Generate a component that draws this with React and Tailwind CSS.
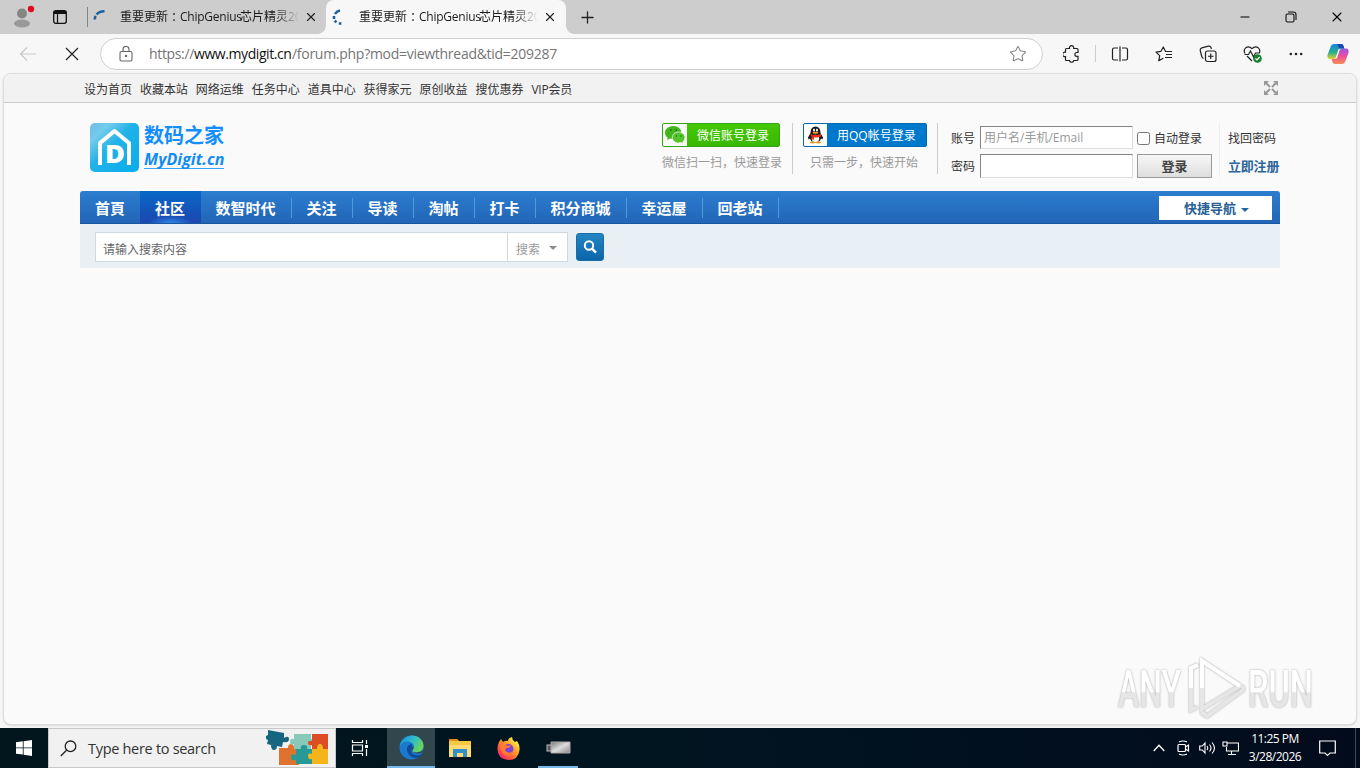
import { X, Plus, Minus, Star } from "lucide-react";

const topLinks = [
  "设为首页",
  "收藏本站",
  "网络运维",
  "任务中心",
  "道具中心",
  "获得家元",
  "原创收益",
  "搜优惠券",
  "VIP会员",
];

const navItems = [
  "首頁",
  "社区",
  "数智时代",
  "关注",
  "导读",
  "淘帖",
  "打卡",
  "积分商城",
  "幸运屋",
  "回老站",
];

const TabTitle = () => (
  <div className="flex w-[182px] whitespace-nowrap text-[12px] leading-[18px] text-[#1b1b1b] [mask-image:linear-gradient(to_right,black_155px,transparent_179px)]">
    <span>重要更新</span>
    <span lang="zh-TW" className="font-['Noto_Sans_CJK_TC',sans-serif]">：</span>
    <span className="w-[60px] tracking-[-0.25px]">ChipGenius</span>
    <span>芯片精灵</span>
    <span className="tracking-[-0.2px]">20</span>
  </div>
);

const TabStrip = () => (
  <div className="flex h-[34px] shrink-0 items-center bg-[#cdcdcd]">
    <svg className="ml-[12px] h-[24px] w-[24px] shrink-0" viewBox="0 0 24 24">
      <circle cx="10" cy="8.500" r="5" fill="#858585" />
      <ellipse cx="10" cy="18.500" rx="8" ry="4" fill="#999" />
      <circle cx="19" cy="4" r="3.200" fill="#e00b1c" />
    </svg>
    <svg className="ml-[17px] h-[14px] w-[14px] shrink-0" viewBox="0 0 14 14" fill="none" stroke="#111">
      <rect x="0.700" y="0.700" width="12.600" height="12.600" rx="2" strokeWidth="1.300" />
      <path d="M1 2.500h12" strokeWidth="3" />
      <path d="M4.500 3v10" strokeWidth="1.200" />
    </svg>
    <div className="ml-[20px] h-[20px] w-px shrink-0 bg-[#858585]" />
    <svg className="ml-[4px] h-[16px] w-[16px] shrink-0" viewBox="0 0 16 16" fill="none" stroke="#1d629f" strokeWidth="2.600">
      <path d="M2.700 10.500q.1-2 1-3.500M4.500 5.500q2.500-3.300 8-3.300" />
    </svg>
    <div className="ml-[12px]">
      <TabTitle />
    </div>
    <X className="ml-[2px] h-[14px] w-[14px] shrink-0 text-[#222]" strokeWidth={2} />
    <div className="relative ml-[8px] flex h-[34px] w-[240px] items-center rounded-t-[8px] bg-[#f7f7f7]">
      <div className="absolute -left-[8px] bottom-0 h-[8px] w-[8px] bg-[radial-gradient(circle_at_0_0,#cdcdcd_7.5px,#f7f7f7_8px)]" />
      <div className="absolute -right-[8px] bottom-0 h-[8px] w-[8px] bg-[radial-gradient(circle_at_100%_0,#cdcdcd_7.5px,#f7f7f7_8px)]" />
      <svg className="ml-[5px] h-[18px] w-[16px] shrink-0" viewBox="0 0 16 18" fill="none" stroke="#1d629f" strokeWidth="2.600">
        <path d="M9 2.500Q5.500 3.200 4 6M3 8v3M3.800 12.500l1.500 2M7.800 15.500h2.600" />
      </svg>
      <div className="ml-[12px]">
        <TabTitle />
      </div>
      <X className="ml-[2px] h-[14px] w-[14px] shrink-0 text-[#222]" strokeWidth={2} />
    </div>
    <Plus className="ml-[12px] h-[19px] w-[19px] text-[#222]" strokeWidth={1.6} />
    <div className="ml-auto flex items-center">
      <Minus className="h-[14px] w-[14px] text-black" strokeWidth={1.8} />
      <svg className="ml-[33px] h-[12px] w-[12px]" viewBox="0 0 12 12" fill="none" stroke="#111" strokeWidth="1.100">
        <rect x="1" y="3" width="8" height="8" rx="1.500" />
        <path d="M3 1h5.500A2.500 2.500 0 0 1 11 3.500V9" />
      </svg>
      <X className="mr-[15px] ml-[32px] h-[16px] w-[16px] text-black" strokeWidth={1.6} />
    </div>
  </div>
);

const Toolbar = () => (
  <div className="flex h-[39px] shrink-0 items-center bg-[#f7f7f7]">
    <svg className="ml-[19px] h-[16px] w-[18px]" viewBox="0 0 18 16" fill="none" stroke="#c9c9c9" strokeWidth="1.200">
      <path d="M17 8H1.500M8 1.500L1.500 8 8 14.500" />
    </svg>
    <svg className="ml-[28px] h-[14px] w-[14px]" viewBox="0 0 14 14" fill="none" stroke="#222" strokeWidth="1.200">
      <path d="M1 1l12 12M13 1L1 13" />
    </svg>
    <div className="mt-px ml-[21px] flex h-[32px] w-[943px] items-center rounded-full border border-[#d0d0d0] bg-white">
      <svg className="ml-[18px] h-[16px] w-[14px]" viewBox="0 0 14 16" fill="none" stroke="#666" strokeWidth="1.100">
        <rect x="1" y="5.500" width="12" height="9.500" rx="1.500" />
        <path d="M4 5.500V3.500a3 3 0 0 1 6 0v2" />
        <circle cx="7" cy="10" r="0.700" fill="#666" />
      </svg>
      <div className="ml-[16px] flex w-[420px] text-[14px] leading-[20px] whitespace-nowrap text-[#757575]">
        <span className="w-[45px] tracking-[-0.35px]">https://</span>
        <span className="w-[98px] tracking-[-0.42px] text-[#111]">www.mydigit.cn</span>
        <span className="tracking-[-0.28px]">/forum.php?mod=viewthread&amp;tid=209287</span>
      </div>
      <Star className="mr-[15px] ml-auto h-[18px] w-[18px] text-[#858585]" strokeWidth={1.4} />
    </div>
    <svg className="ml-[20px] h-[18px] w-[18px]" viewBox="0 0 18 18" fill="none" stroke="#222" strokeWidth="1.200">
      <path d="M3.500 3.500h3a2.200 2.200 0 1 1 4.200 0H14q1 0 1 1v3h-1.200a1.900 1.900 0 0 0 0 3.800H15v3.200q0 1-1 1h-3.200a2.200 2.200 0 0 1-4.300 0h-3q-1 0-1-1v-3a2.200 2.200 0 1 1 0-4.200V4.500q0-1 1-1z" />
    </svg>
    <div className="ml-[14px] h-[17px] w-px bg-[#ccc]" />
    <svg className="ml-[15px] h-[18px] w-[18px]" viewBox="0 0 18 18" fill="none" stroke="#222" strokeWidth="1.200">
      <path d="M7 3H3Q1.500 3 1.500 4.500v9Q1.500 15 3 15h4M9 1.500v15M11 3h4q1.500 0 1.500 1.500v9Q16.500 15 15 15h-4" />
    </svg>
    <svg className="ml-[26px] h-[18px] w-[18px]" viewBox="0 0 18 18" fill="none" stroke="#222" strokeWidth="1.200" strokeLinejoin="round">
      <path d="M12.500 6.500H10.500L8.300 2 6 6.300l-5 .8 3.700 3.500-.9 5 4.500-2.300M11 9.500h6M10 12.500h7M12.500 6.500H17" />
    </svg>
    <svg className="ml-[26px] h-[18px] w-[18px]" viewBox="0 0 18 18" fill="none" stroke="#222" strokeWidth="1.200">
      <rect x="6.500" y="6" width="10.500" height="10.500" rx="2" />
      <path d="M11.750 8.500v5.500M9 11.250h5.500M4.500 13.500Q3 13 2.600 11L1.200 5.500Q.9 3.500 2.800 2.900l6.700-1.700q2-.3 2.600 1.500l.3 1.300" />
    </svg>
    <svg className="ml-[26px] h-[18px] w-[20px]" viewBox="0 0 20 18" fill="none" stroke="#222" strokeWidth="1.200">
      <path d="M2 8.500Q0 5 3 2.600q3-2 6 1 3-3 6-1 3 2.400 1 5.900M4 11l5 5M1.500 9.500h4L7.500 6l3 6 2-4h4" />
      <circle cx="14.500" cy="13.500" r="4.300" fill="#17802c" stroke="none" />
      <path d="M12.500 13.500l1.500 1.500 2.700-3" stroke="white" />
    </svg>
    <svg className="ml-[26px] h-[4px] w-[14px]" viewBox="0 0 14 4" fill="#222">
      <circle cx="1.800" cy="2" r="1.300" />
      <circle cx="7" cy="2" r="1.300" />
      <circle cx="12.200" cy="2" r="1.300" />
    </svg>
    <svg className="ml-[24px] h-[22px] w-[22px]" viewBox="0 0 22 22">
      <defs>
        <linearGradient id="cpA" x1="0" y1="0" x2="0" y2="1">
          <stop offset="0" stopColor="#1684e0" />
          <stop offset="0.550" stopColor="#23b08d" />
          <stop offset="1" stopColor="#e2d325" />
        </linearGradient>
        <linearGradient id="cpB" x1="0" y1="0" x2="0" y2="1">
          <stop offset="0" stopColor="#a154e3" />
          <stop offset="0.500" stopColor="#e9509a" />
          <stop offset="1" stopColor="#fb8b55" />
        </linearGradient>
      </defs>
      <path d="M7 1h7.500q1.500 0 2 2l.8 2.500h-3.800q-2 0-2.500 2L9 14q-.6 2-2.500 2H3q-3 0-2.500-4L3.500 4Q4.500 1 7 1z" fill="url(#cpA)" />
      <path d="M15 21H8q-2 0-2.500-2l-.8-3H8q2 0 2.500-2L12.500 7.500q.5-2 2.500-2H19q3 0 2.600 4L18.500 18q-1 3-3.500 3z" fill="url(#cpB)" />
      <path d="M10 1h4.500q1.500 0 2 2l.8 2.500h-5z" fill="#1949b6" />
    </svg>
  </div>
);

const Logo = () => (
  <div className="mt-[20px] ml-[10px] flex">
    <svg className="h-[49px] w-[49px]" viewBox="0 0 49 49">
      <defs>
        <linearGradient id="logoBg" x1="0" y1="0" x2="1" y2="1">
          <stop offset="0" stopColor="#6fbde3" />
          <stop offset="0.200" stopColor="#74cbec" />
          <stop offset="0.450" stopColor="#22b2e8" />
          <stop offset="1" stopColor="#05adee" />
        </linearGradient>
      </defs>
      <rect width="49" height="49" rx="5" fill="url(#logoBg)" />
      <path d="M10 42V20L24.500 8 39 20v22" fill="none" stroke="white" strokeWidth="4" strokeLinejoin="round" />
      <text x="15" y="39.500" fontSize="25" fontWeight="800" fill="white" fontFamily="Open Sans, sans-serif" textLength="20" lengthAdjust="spacingAndGlyphs">D</text>
    </svg>
    <div className="ml-[5px] h-[50px] w-[82px]">
      <div className="text-[20px] leading-[25px] font-bold whitespace-nowrap text-[#148eff]">数码之家</div>
      <div className="mt-[2px] w-[80px] border-b border-[#35a4fb] text-[16px] leading-[18px] font-bold tracking-[0.05px] whitespace-nowrap text-[#128cf5] italic">MyDigit.cn</div>
    </div>
  </div>
);

const LoginArea = () => (
  <div className="mt-[20px] ml-auto flex items-start text-[12px] leading-[16px]">
    <div className="h-[51px] w-[131px] border-r border-[#ccc]">
      <div className="flex h-[24px] w-[118px] overflow-hidden rounded-[2px] border border-[#36a414] bg-gradient-to-b from-[#45c805] to-[#38b800] text-white">
        <div className="flex w-[24px] items-center justify-center bg-[#f8fbf7]">
          <svg className="h-[20px] w-[22px]" viewBox="0 0 22 20">
            <path d="M9.500 1C4.500 1 1 4 1 7.700c0 2 1 3.700 2.700 4.900L3 15l3-1.500q4 1 7-.8c3-1.400 4.300-3 4.300-5C17.300 4 14 1 9.500 1z" fill="#43b51d" />
            <path d="M14.500 7C11 7 8.300 9.500 8.300 12.500S11 18 14.500 18l2.500-.5 2.300 1.500-.5-2.200q2.200-1.600 2.200-4.300C21 9.500 18 7 14.500 7z" fill="#55c42b" stroke="white" strokeWidth="0.700" />
            <path d="M6 5h1.500M11.500 5H13M12 11h1M16.500 11h1" stroke="#1b6b0b" strokeWidth="1.500" />
          </svg>
        </div>
        <span className="ml-[10px] leading-[23px]">微信账号登录</span>
      </div>
      <div className="mt-[8px] w-[122px] whitespace-nowrap text-[#999]">微信扫一扫，快速登录</div>
    </div>
    <div className="ml-[10px] h-[51px] w-[135px] border-r border-[#ccc]">
      <div className="flex h-[24px] w-[124px] overflow-hidden rounded-[2px] border border-[#0869b6] bg-[#0079cd] text-white">
        <div className="flex w-[23px] items-center justify-center bg-white">
          <svg className="h-[18px] w-[17px]" viewBox="0 0 17 18">
            <path d="M3.500 7q0-6.500 5-6.500t5 6.500l2.500 4.500-.5 2-1.500-1q-1 4-5.500 4T3 12.500l-1.500 1-.5-2z" fill="#1b1718" />
            <ellipse cx="8.500" cy="12.500" rx="3.700" ry="3.700" fill="white" />
            <ellipse cx="7" cy="4" rx="1" ry="1.500" fill="white" />
            <ellipse cx="10" cy="4" rx="1" ry="1.500" fill="white" />
            <ellipse cx="8.500" cy="6.700" rx="3" ry="1" fill="#ffa01c" />
            <path d="M3 7.800q5.500 2.500 11 0v2.700q-3.500 1.500-7 .8V13.500H4.500v-3z" fill="#e82d18" />
            <ellipse cx="5.500" cy="16.500" rx="2.700" ry="1" fill="#f59b17" />
            <ellipse cx="11.500" cy="16.500" rx="2.700" ry="1" fill="#f59b17" />
          </svg>
        </div>
        <span className="ml-[10px] leading-[23px] whitespace-nowrap">用QQ帐号登录</span>
      </div>
      <div className="mt-[8px] ml-[7px] w-[110px] whitespace-nowrap text-[#999]">只需一步，快速开始</div>
    </div>
    <div className="ml-[13px] flex flex-col gap-[5px] pt-[2px] text-[#333]">
      <div className="flex h-[24px] items-center">
        <span className="w-[29px] pt-[4px]">账号</span>
        <input
          className="h-[23px] w-[153px] border border-t-[#848484] border-r-[#ddd] border-b-[#ddd] border-l-[#848484] bg-white px-[3px] text-[12px] placeholder:text-[#999]"
          placeholder="用户名/手机/Email"
        />
        <input type="checkbox" className="mt-[2px] ml-[4px] h-[13px] w-[13px]" />
        <span className="ml-[4px] pt-[4px]">自动登录</span>
      </div>
      <div className="flex h-[24px] items-center">
        <span className="w-[29px] pt-[1px]">密码</span>
        <input className="h-[24px] w-[153px] border border-t-[#848484] border-r-[#ddd] border-b-[#ddd] border-l-[#848484] bg-white px-[4px]" />
        <button className="ml-[4px] h-[24px] w-[75px] border border-[#999] bg-gradient-to-b from-[#f6f6f6] to-[#dedede] pb-px text-[13px] leading-[16px] font-bold text-[#444]">
          登录
        </button>
      </div>
    </div>
    <div className="ml-[7px] flex h-[54px] w-[61px] flex-col gap-[12px] border-l border-[#eee] pt-[8px] pl-[8px] whitespace-nowrap text-[#333]">
      <span>找回密码</span>
      <span className="-mt-px text-[13px] font-bold tracking-[-0.2px] text-[#2c659a]">立即注册</span>
    </div>
  </div>
);

const NavBar = () => (
  <div className="flex h-[33px] shrink-0 rounded-t-[3px] border-b border-[#1757a0] bg-gradient-to-b from-[#2c7dd0] to-[#2265b6] text-[15px] leading-[34px] font-bold text-white">
    {navItems.map((item, i) => {
      if (item === "社区") {
        return (
          <div key={item} className="w-[61px] bg-[radial-gradient(ellipse_22px_7px_at_50%_100%,#2f86e8,transparent),linear-gradient(to_bottom,#0867c7,#1c48b0)] pl-[15px]">
            {item}
          </div>
        );
      }
      return (
        <div key={item} className={i === 0 ? "w-[60px] pl-[15px]" : "relative pr-[16.5px] pl-[14.5px]"}>
          {item}
          {i > 0 && <i className="absolute top-[7px] right-0 h-[20px] w-px bg-[#5299dc]" />}
        </div>
      );
    })}
    <div className="mt-[5px] mr-[8px] ml-auto flex h-[24px] w-[113px] items-center bg-white pl-[25px] text-[13px] leading-[24px] text-[#286094]">
      快捷导航
      <svg className="mt-[3px] ml-[5px] h-[4px] w-[8px]" viewBox="0 0 8 4" fill="#2068a4">
        <path d="M0 0h8L4 4z" />
      </svg>
    </div>
  </div>
);

const SearchBar = () => (
  <div className="flex h-[44px] shrink-0 bg-[#e8eff5] pt-[8px] pl-[15px] text-[12px]">
    <input
      className="h-[30px] w-[413px] border border-[#cfd9e1] bg-white px-[7px] pt-[4px] text-[12px] placeholder:text-[#666]"
      placeholder="请输入搜索内容"
    />
    <div className="flex h-[30px] w-[60px] items-center border border-l-0 border-[#cfd9e1] bg-white pt-[5px] pl-[8px] text-[#999]">
      搜索
      <svg className="mb-[4px] ml-[9px] h-[4px] w-[8px]" viewBox="0 0 8 4" fill="#8b8b8b">
        <path d="M0 0h8L4 4z" />
      </svg>
    </div>
    <button className="mt-px ml-[8px] flex h-[28px] w-[28px] items-center justify-center rounded-[3px] border border-[#1a6ca5] bg-gradient-to-b from-[#2385c5] to-[#0966a9]">
      <svg className="h-[14px] w-[14px]" viewBox="0 0 14 14" fill="none" stroke="white">
        <circle cx="6" cy="5.500" r="4.200" strokeWidth="2" />
        <path d="M9 8.700l4 4" strokeWidth="2.400" />
      </svg>
    </button>
  </div>
);

const Watermark = () => (
  <svg className="absolute right-[23px] bottom-0 h-[74px] w-[221px] drop-shadow-[0_0_1px_#aaa]" viewBox="0 0 221 74" fontFamily="Roboto, sans-serif">
    <defs>
      <linearGradient id="wm" x1="0" y1="0" x2="0" y2="1">
        <stop offset="0.530" stopColor="#fff" />
        <stop offset="0.560" stopColor="#e6e6e6" />
      </linearGradient>
    </defs>
    <text x="6" y="57" fontSize="51" fontWeight="500" fill="url(#wm)" textLength="63" lengthAdjust="spacingAndGlyphs">ANY</text>
    <g fill="none" stroke="#e6e6e6" strokeWidth="4">
      <path d="M86 15l-7 3v42l6-3" />
      <path d="M89 62l6 4 36-26v-4" />
      <path d="M90 59V11L128 36z" />
    </g>
    <path d="M79 38V18l7-3M90 38V11L128 36" fill="none" stroke="white" strokeWidth="4" />
    <text x="136" y="57" fontSize="51" fontWeight="500" fill="url(#wm)" textLength="65" lengthAdjust="spacingAndGlyphs">RUN</text>
  </svg>
);

const ForumPage = () => (
  <div className="relative mx-[3px] flex h-[652px] shrink-0 flex-col overflow-hidden rounded-[8px] border border-[#ddd] bg-[#fafafa] shadow-sm">
    <div className="flex h-[29px] shrink-0 items-center border-b border-[#cdcdcd] bg-[#f2f2f2] pr-[78px] pl-[80px] text-[12px] text-[#333]">
      <div className="flex gap-[8px] pt-[3px] whitespace-nowrap">
        {topLinks.map((t) => (
          <span key={t} className={t === "VIP会员" ? "tracking-[-0.2px]" : "tracking-[-0.02px]"}>{t}</span>
        ))}
      </div>
      <svg className="ml-auto h-[14px] w-[14px]" viewBox="0 0 14 14" fill="#999" stroke="#999" strokeWidth="2">
        <path d="M2 2l4 4M12 2L8 6M2 12l4-4M12 12L8 8" />
        <path d="M0 0h5L0 5zM14 0H9l5 5zM0 14V9l5 5zM14 14H9l5-5z" stroke="none" />
      </svg>
    </div>
    <div className="mx-[76px] flex w-[1200px] flex-col">
      <div className="flex h-[88px]">
        <Logo />
        <LoginArea />
      </div>
      <NavBar />
      <SearchBar />
    </div>
    <Watermark />
  </div>
);

const Taskbar = () => (
  <div className="mt-[3px] flex h-[40px] shrink-0 items-center bg-gradient-to-r from-[#02161e] via-[#011521] to-[#020b1c] text-white">
    <div className="flex w-[48px] justify-center">
      <svg className="h-[16px] w-[16px]" viewBox="0 0 16 16" fill="white">
        <path d="M0 2.300l6.800-1v6.200H0zM7.600 1.200L16 0v7.500H7.600zM0 8.300h6.800v6.300L0 13.700zM7.600 8.300H16V16l-8.400-1.200z" />
      </svg>
    </div>
    <div className="flex h-[40px] w-[288px] items-center border border-[#c8c8c8] bg-[#f1f1f1] text-[#333]">
      <svg className="ml-[11px] h-[17px] w-[17px]" viewBox="0 0 17 17" fill="none" stroke="#222" strokeWidth="1.300">
        <circle cx="10.500" cy="6.300" r="5.300" />
        <path d="M6.500 10.200L.8 16" />
      </svg>
      <span className="ml-[11px] w-[132px] pt-[2px] text-[14.5px] tracking-[-0.3px] whitespace-nowrap">Type here to search</span>
      <svg className="ml-[46px] h-[38px] w-[66px]" viewBox="0 0 66 38">
        <path d="M13 19h9q0-4 3-4t3 4h5v17H13z" fill="#df722d" />
        <path d="M28 5h17v5q4-2 4 3t-4 3v4H28v-5q-4 2-4-2t4-3z" fill="#88cab8" />
        <path d="M46 5h16v15H46v-4q-4 1-4-2t4-2z" fill="#dc4d24" />
        <path d="M30 20h5q-1-4 3-4t3 4h5v15H30v-4q-5 1-5-3t5-2z" fill="#279a98" />
        <path d="M46 20h5q0-5 3-5t3 5h5v15H46v-5q-4 1-4-3t4-2z" fill="#f5b51a" />
        <path d="M2 1l16 3v5q5-3 5 1t-6 3l-1 5-5-1q0 4-3 4t-3-5l-4-1 1-4Q-1 10 0 7l2-1z" fill="#176681" />
      </svg>
    </div>
    <div className="flex w-[51px] justify-center pr-[4px]">
      <svg className="h-[18px] w-[18px]" viewBox="0 0 18 18" fill="none" stroke="white" strokeWidth="1.200">
        <path d="M1.500 1v2.500h10V1M1.500 6h10v6h-10zM1.500 17v-2.500h10V17M15.500 1v4M15.500 10v7" />
        <path d="M14 7.500h3" strokeWidth="3" />
      </svg>
    </div>
    <div className="flex h-[40px] w-[48px] items-center justify-center border-b-2 border-[#76b9ed] bg-[#32464e]">
      <svg className="mt-[1px] h-[25px] w-[25px]" viewBox="0 0 25 25">
        <defs>
          <linearGradient id="edgeTop" x1="0" y1="0" x2="1" y2="0.500">
            <stop offset="0" stopColor="#168bd4" />
            <stop offset="0.500" stopColor="#2bb9d2" />
            <stop offset="1" stopColor="#67d65f" />
          </linearGradient>
        </defs>
        <circle cx="12.500" cy="12.500" r="12" fill="#1879cf" />
        <path d="M.7 11.500C2 4.500 7 .5 13 .5c7 0 11.500 5 11.500 10 0 4.500-3 7-7 7-3.500 0-4-1-4-2s1.500-1.500 1.500-4c0-3-3-5-7-5C4.500 6.500 2 8.500.7 11.500z" fill="url(#edgeTop)" />
        <path d="M13 9c-4 0-6 4-4.500 8 1.300 3.400 4.500 6 8.500 6 3 0 5-2.500 6-4-8 3.500-13-1-10-7z" fill="#0c4c99" />
        <path d="M13 11.500c-1.500 3 .5 6.500 4.500 7 2 .3 4-.2 5.500-1l1-3c-2 2.300-4 3-6.500 3-3.500 0-4.500-1.500-4-2.500.8-1 1.300-2 .8-3z" fill="#32464e" />
      </svg>
    </div>
    <div className="flex w-[49px] justify-center">
      <svg className="h-[18px] w-[22px]" viewBox="0 0 22 18">
        <path d="M0 0h8l2 2h12v16H0z" fill="#f9c842" />
        <path d="M0 0h8l1.500 2H0z" fill="#e48b1d" />
        <path d="M0 6h22v12H0z" fill="#ffdc72" />
        <path d="M4 10h14v8h-4v-4H8v4H4z" fill="#328fcb" />
      </svg>
    </div>
    <div className="flex w-[49px] justify-center">
      <svg className="h-[23px] w-[23px]" viewBox="0 0 23 23">
        <defs>
          <linearGradient id="fox" x1="1" y1="0" x2="0.100" y2="1">
            <stop offset="0.150" stopColor="#fff04a" />
            <stop offset="0.450" stopColor="#ff9b27" />
            <stop offset="0.750" stopColor="#ff4d42" />
            <stop offset="1" stopColor="#e91593" />
          </linearGradient>
        </defs>
        <path d="M2 5l2-3 2 3q3-2 5-1 0-3 4-4 0 3 3 5l2-1q3 4 2.500 9Q21.500 23 11.500 23 0 22 .5 11q0-3 1.500-6z" fill="url(#fox)" />
        <circle cx="11.500" cy="12" r="5" fill="#8140d7" />
        <path d="M3 8q4-2 8 1l3-1q-1 3-4 3-3 1-1 3.500 4 2.500 7-.5-1 5-6 4.500Q3 17 3 8z" fill="#ff7b32" />
      </svg>
    </div>
    <div className="ml-[5px] flex h-[40px] w-[40px] items-center justify-center border-b-2 border-[#76b9ed]">
      <svg className="mt-px h-[14px] w-[25px]" viewBox="0 0 25 14">
        <defs>
          <linearGradient id="usb" x1="0" y1="0" x2="1" y2="1">
            <stop offset="0" stopColor="#777" />
            <stop offset="0.500" stopColor="#ddd" />
            <stop offset="1" stopColor="#888" />
          </linearGradient>
        </defs>
        <rect x="1" y="4" width="5" height="6" fill="#555" stroke="#bbb" />
        <path d="M5 1h19v11H5z" fill="url(#usb)" stroke="#aaa" />
      </svg>
    </div>
    <div className="ml-auto flex items-center">
      <svg className="h-[8px] w-[12px]" viewBox="0 0 12 8" fill="none" stroke="white" strokeWidth="1.300">
        <path d="M.7 7L6 1.300 11.300 7" />
      </svg>
      <svg className="ml-[12px] h-[16px] w-[13px]" viewBox="0 0 13 16" fill="none" stroke="white" strokeWidth="1.200">
        <rect x="1" y="4.500" width="7.500" height="7" rx="1" />
        <path d="M8.500 7l3-2v6l-3-2M2 2q4-2 8 0M2 14q4 2 8 0" />
      </svg>
      <svg className="ml-[9px] h-[14px] w-[17px]" viewBox="0 0 17 14" fill="none" stroke="white" strokeWidth="1.100">
        <path d="M.7 5h2.600L6 2v10L3.300 9H.7zM8 5q1.500 2 0 4M10.500 3.500q3 3.500 0 7M13 1.500q5 5.500 0 11" />
      </svg>
      <svg className="ml-[6px] h-[14px] w-[17px]" viewBox="0 0 17 14" fill="none" stroke="white" strokeWidth="1.100">
        <path d="M5 2h11.500v8H4.500V6M9.500 10v3M6 13.500h8M1 1h4v4H1z" />
      </svg>
      <div className="ml-[6px] w-[60px] text-center text-[12px] leading-[18px] tracking-[-0.5px] whitespace-nowrap">
        <div>11:25 PM</div>
        <div>3/28/2026</div>
      </div>
      <svg className="mr-[19px] ml-[14px] h-[17px] w-[17px]" viewBox="0 0 17 17" fill="none" stroke="white" strokeWidth="1.200">
        <path d="M.7 1h15.600v12H11l-2.500 2.500L6 13H.7z" />
      </svg>
      <div className="mr-[4px] h-[40px] w-px bg-[#3c4857]" />
    </div>
  </div>
);

const App = () => {
  return (
    <div className="flex h-[768px] w-[1360px] flex-col overflow-hidden bg-[#f7f7f7] font-['Open_Sans','Noto_Sans_CJK_SC',sans-serif]">
      <TabStrip />
      <Toolbar />
      <ForumPage />
      <Taskbar />
    </div>
  );
};

export default App;
